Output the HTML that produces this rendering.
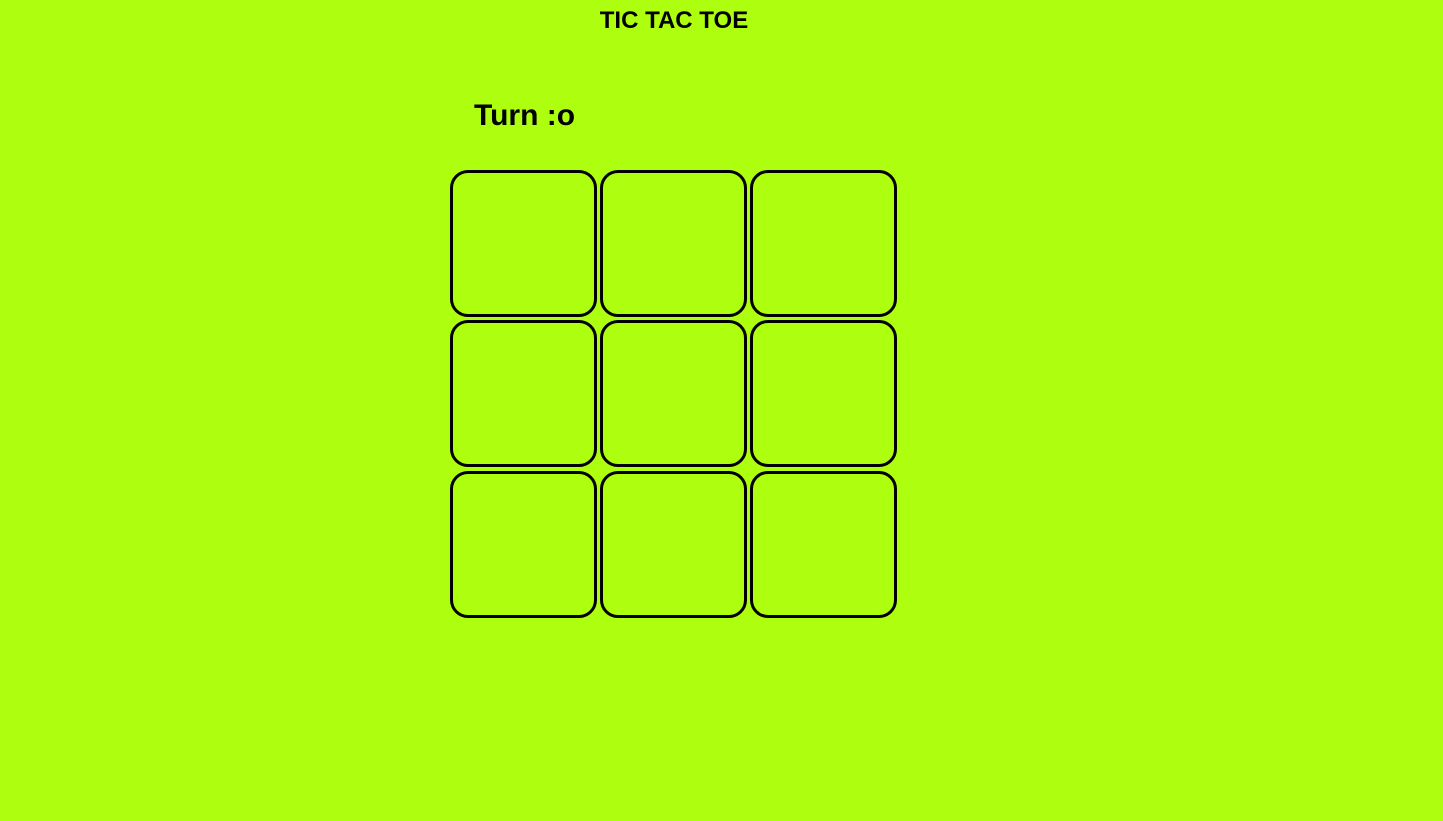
<!DOCTYPE html>
<html><head><style>
body{margin:0;background:#adff0f;width:1443px;height:821px;position:relative;font-family:"Liberation Sans",sans-serif;color:#000;overflow:hidden}
h1{position:absolute;top:7px;left:0;width:1348px;text-align:center;margin:0;font-size:24px;font-weight:bold;letter-spacing:0}
h2{position:absolute;top:99px;left:474px;margin:0;font-size:30px;font-weight:bold}
.b{position:absolute;width:141px;height:141px;border:3px solid #000;border-radius:18px;box-sizing:content-box}
</style></head><body>
<h1>TIC TAC TOE</h1>
<h2>Turn :o</h2>
<div class="b" style="left:450px;top:170px"></div>
<div class="b" style="left:600px;top:170px"></div>
<div class="b" style="left:750px;top:170px"></div>
<div class="b" style="left:450px;top:320px"></div>
<div class="b" style="left:600px;top:320px"></div>
<div class="b" style="left:750px;top:320px"></div>
<div class="b" style="left:450px;top:471px"></div>
<div class="b" style="left:600px;top:471px"></div>
<div class="b" style="left:750px;top:471px"></div>
</body></html>
